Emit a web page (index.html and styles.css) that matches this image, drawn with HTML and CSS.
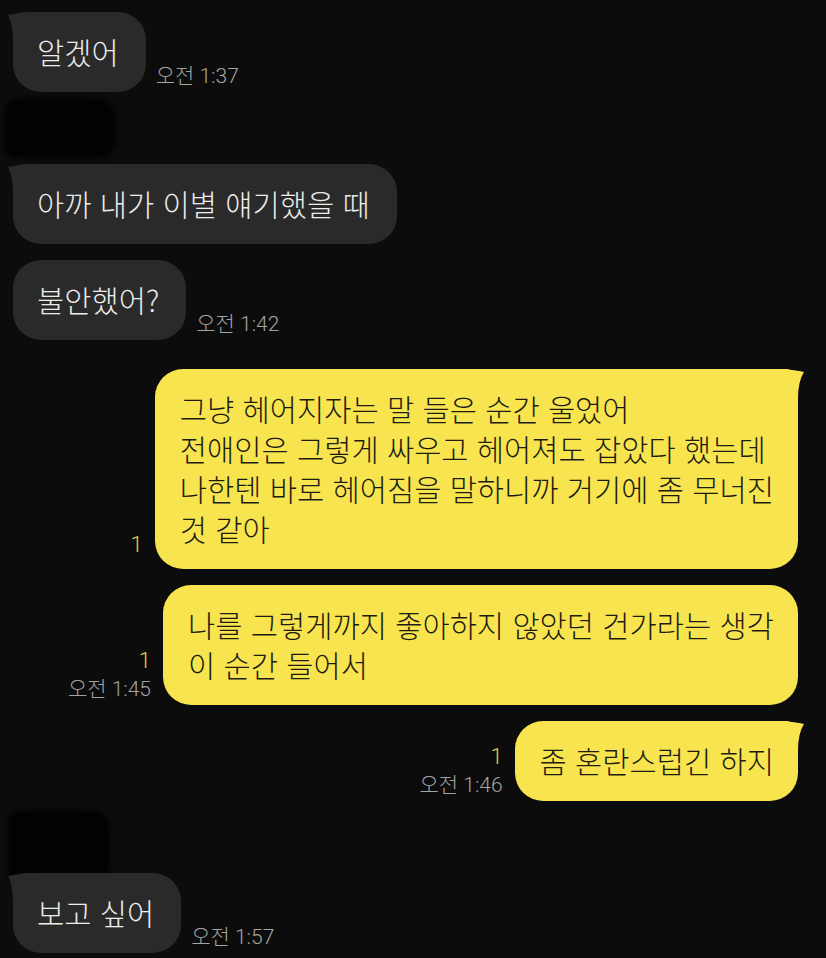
FILE: index.html
```html
<!DOCTYPE html>
<html lang="ko">
<head>
    <meta charset="UTF-8">
    <meta name="viewport" content="width=device-width, initial-scale=1.0">
    <title>채팅</title>
    <link rel="stylesheet" href="styles.css">
</head>
<body>

    <div class="chat">
        <div class="row row-in">
            <div class="bubble bubble-in tail">알겠어</div>
            <div class="meta"><span class="time">오전 1:37</span></div>
        </div>

        <div class="redact"></div>

        <div class="row row-in">
            <div class="bubble bubble-in tail">아까 내가 이별 얘기했을 때</div>
        </div>
        <div class="row row-in">
            <div class="bubble bubble-in">불안했어?</div>
            <div class="meta"><span class="time">오전 1:42</span></div>
        </div>

        <div class="row row-out gap-lg">
            <div class="meta meta-solo"><span class="count">1</span></div>
            <div class="bubble bubble-out tail">그냥 헤어지자는 말 들은 순간 울었어<br>전애인은 그렇게 싸우고 헤어져도 잡았다 했는데<br>나한텐 바로 헤어짐을 말하니까 거기에 좀 무너진<br>것 같아</div>
        </div>
        <div class="row row-out">
            <div class="meta"><span class="count">1</span><span class="time">오전 1:45</span></div>
            <div class="bubble bubble-out">나를 그렇게까지 좋아하지 않았던 건가라는 생각<br>이 순간 들어서</div>
        </div>
        <div class="row row-out">
            <div class="meta"><span class="count">1</span><span class="time">오전 1:46</span></div>
            <div class="bubble bubble-out tail">좀 혼란스럽긴 하지</div>
        </div>

        <div class="redact redact-tall"></div>

        <div class="row row-in">
            <div class="bubble bubble-in tail">보고 싶어</div>
            <div class="meta"><span class="time">오전 1:57</span></div>
        </div>
    </div>

</body>
</html>
```

FILE: styles.css
```css
body { margin: 0; background-color: #0c0c0c; font-family: "Noto Sans CJK KR", "Noto Sans", sans-serif; }
.chat { width: 826px; height: 958px; box-sizing: border-box; padding: 12px 28px 0 13px; overflow: hidden; }

.row { display: flex; align-items: flex-end; margin-top: 16px; }
.row:first-child { margin-top: 0; }
.row-in { gap: 10px; }
.row-out { justify-content: flex-end; gap: 12px; }
.gap-lg { margin-top: 29px; }

.bubble { position: relative; font-size: 29.6px; font-weight: 300; line-height: 40px; padding: 20px 27px 20px 24px; border-radius: 28px; white-space: nowrap; }
.bubble-in { background: #2a2a2a; color: #ececec; }
.bubble-out { background: #f8e44f; color: #1d1c12; padding: 20px 24px 20px 25px; }

.bubble-in.tail { border-top-left-radius: 12px; }
.bubble-out.tail { border-top-right-radius: 12px; }
.tail::before { content: ""; position: absolute; top: 0; width: 30px; height: 30px; background: inherit; }
.bubble-in.tail::before { left: -5px; clip-path: path("M0 3 Q8 0.5 30 0 L30 30 L5 30 Q5 12 0 3 Z"); }
.bubble-out.tail::before { right: -6px; clip-path: path("M30 3 Q22 0.5 0 0 L0 30 L24 30 Q24 12 30 3 Z"); }

.meta { display: flex; flex-direction: column; align-items: flex-end; padding-bottom: 3px; flex-shrink: 0; font-family: Roboto, "Noto Sans CJK KR", sans-serif; font-weight: 300; }
.meta-solo { padding-bottom: 12px; }
.count { color: #e0cd46; font-size: 22px; line-height: 24px; margin-bottom: 3px; }
.meta-solo .count { margin-bottom: 0; }
.time { color: #a3a3a3; font-size: 21px; line-height: 26px; white-space: nowrap; }

.redact { width: 110px; height: 60px; margin: 6px 0 6px -8px; background: #020202; border-radius: 14px 20px 16px 10px; filter: blur(2px); }
.redact + .row { margin-top: 0; }
.redact-tall { width: 102px; height: 72px; margin: 9px 0 -9px -5px; }
```
